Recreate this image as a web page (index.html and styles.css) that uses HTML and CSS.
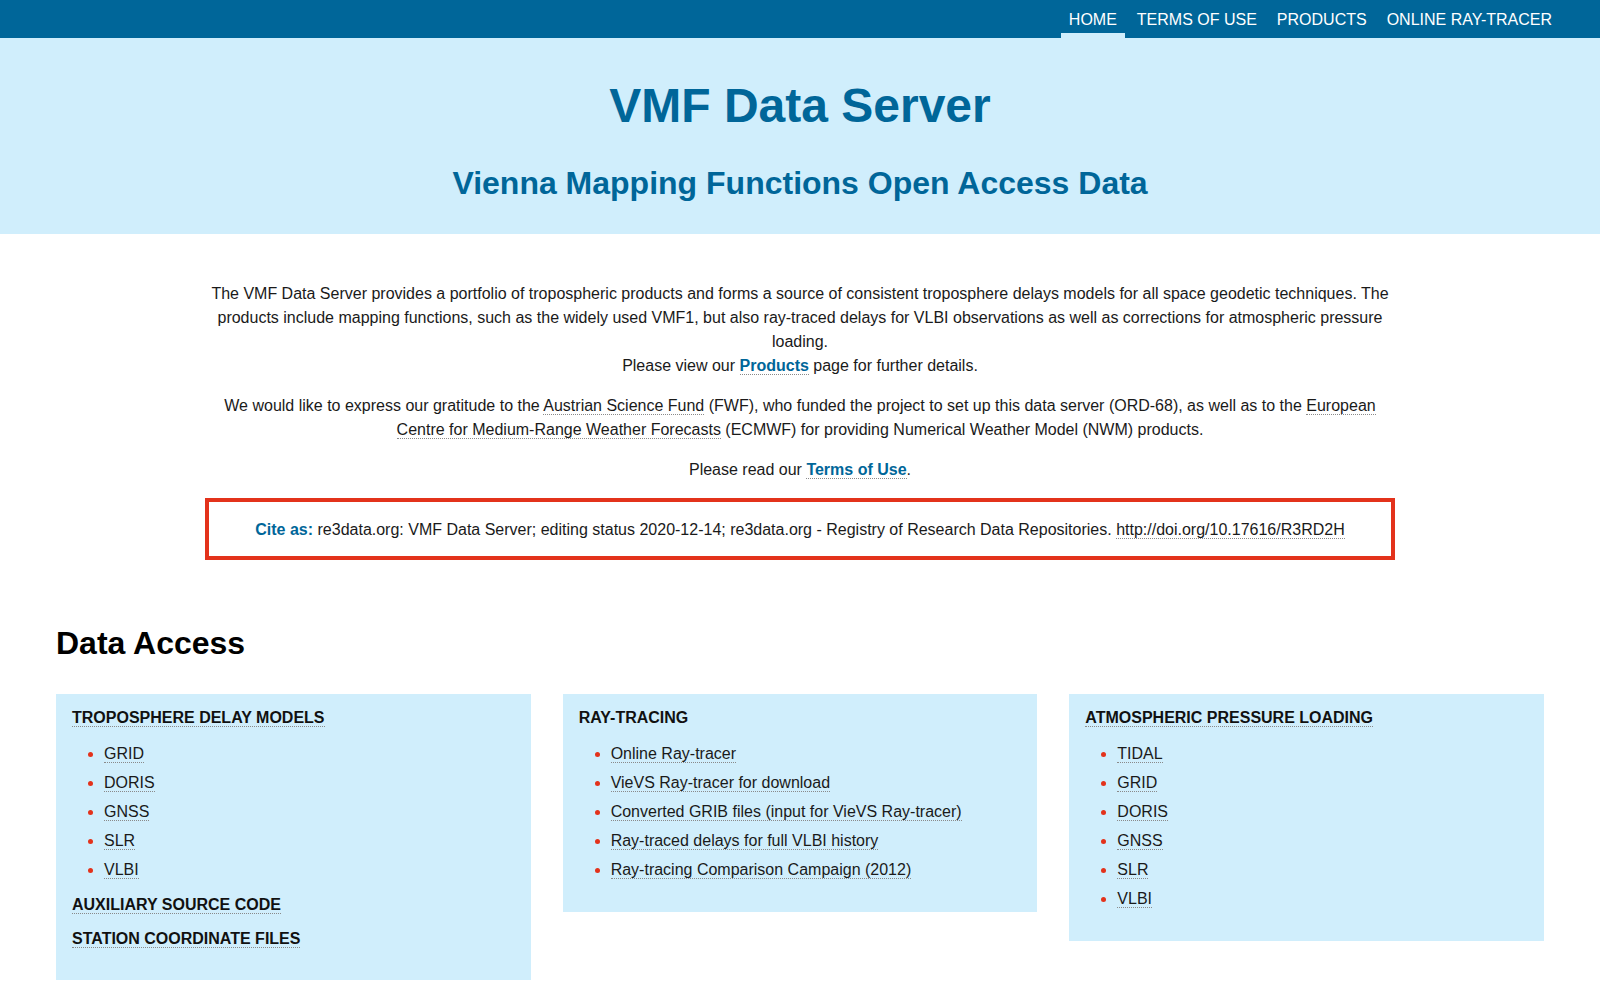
FILE: index.html
```html
<!DOCTYPE html>
<html lang="en">
<head>
    <meta charset="UTF-8">
    <meta name="viewport" content="width=device-width, initial-scale=1.0">
    <title>VMF Data Server</title>
    <link rel="stylesheet" href="styles.css">
</head>
<body>

    <nav class="topbar">
        <a href="#" class="active">Home</a>
        <a href="#">Terms of Use</a>
        <a href="#">Products</a>
        <a href="#">Online Ray-Tracer</a>
    </nav>

    <header class="hero">
        <h1>VMF Data Server</h1>
        <p class="subtitle">Vienna Mapping Functions Open Access Data</p>
    </header>

    <main class="page">
        <section class="intro">
            <p>
                The VMF Data Server provides a portfolio of tropospheric products and forms a source of consistent troposphere delays models for all space geodetic techniques. The products include mapping functions, such as the widely used VMF1, but also ray-traced delays for VLBI observations as well as corrections for atmospheric pressure loading.
                <br>
                Please view our <a href="#" class="strong-link">Products</a> page for further details.
            </p>
            <p>
                We would like to express our gratitude to the <a href="#">Austrian Science Fund</a> (FWF), who funded the project to set up this data server (ORD-68), as well as to the <a href="#">European Centre for Medium-Range Weather Forecasts</a> (ECMWF) for providing Numerical Weather Model (NWM) products.
            </p>
            <p>Please read our <a href="#" class="strong-link">Terms of Use</a>.</p>

            <div class="cite">
                <span class="cite-label">Cite as:</span> re3data.org: VMF Data Server; editing status 2020-12-14; re3data.org - Registry of Research Data Repositories. <a href="#">http://doi.org/10.17616/R3RD2H</a>
            </div>
        </section>

        <h2>Data Access</h2>

        <div class="access-grid">
            <div class="access-box">
                <h3><a href="#">Troposphere Delay Models</a></h3>
                <ul>
                    <li><a href="#">GRID</a></li>
                    <li><a href="#">DORIS</a></li>
                    <li><a href="#">GNSS</a></li>
                    <li><a href="#">SLR</a></li>
                    <li><a href="#">VLBI</a></li>
                </ul>
                <h3><a href="#">Auxiliary Source Code</a></h3>
                <h3><a href="#">Station Coordinate Files</a></h3>
            </div>

            <div class="access-box">
                <h3>Ray-Tracing</h3>
                <ul>
                    <li><a href="#">Online Ray-tracer</a></li>
                    <li><a href="#">VieVS Ray-tracer for download</a></li>
                    <li><a href="#">Converted GRIB files (input for VieVS Ray-tracer)</a></li>
                    <li><a href="#">Ray-traced delays for full VLBI history</a></li>
                    <li><a href="#">Ray-tracing Comparison Campaign (2012)</a></li>
                </ul>
            </div>

            <div class="access-box">
                <h3><a href="#">Atmospheric Pressure Loading</a></h3>
                <ul>
                    <li><a href="#">TIDAL</a></li>
                    <li><a href="#">GRID</a></li>
                    <li><a href="#">DORIS</a></li>
                    <li><a href="#">GNSS</a></li>
                    <li><a href="#">SLR</a></li>
                    <li><a href="#">VLBI</a></li>
                </ul>
            </div>
        </div>
    </main>

</body>
</html>
```

FILE: styles.css
```css
body {
    font-family: "Liberation Sans", Arial, sans-serif;
    font-size: 16px;
    line-height: 24px;
    color: #1a1a1a;
    background: #fff;
    margin: 0;
}
a {
    color: inherit;
    text-decoration: none;
    border-bottom: 1px dotted #8a8a8a;
}

/* top navigation */
.topbar {
    background: #006699;
    height: 38px;
    display: flex;
    justify-content: flex-end;
    gap: 4px;
    padding-right: 40px;
}
.topbar a {
    color: #fff;
    border: none;
    text-transform: uppercase;
    line-height: 38px;
    height: 38px;
    box-sizing: border-box;
    padding: 1px 8px 0;
}
.topbar a.active {
    box-shadow: inset 0 -5px 0 #d0eefc;
}

/* title band */
.hero {
    background: #d0eefc;
    color: #006699;
    text-align: center;
    padding: 39px 0 32px;
}
.hero h1 {
    font-size: 48px;
    line-height: 1.2;
    margin: 0;
}
.subtitle {
    font-size: 32px;
    font-weight: bold;
    line-height: 1.2;
    margin: 29px 0 0;
}

.page {
    padding: 32px 56px 40px;
}
.intro {
    width: 80%;
    margin: 0 auto;
    text-align: center;
}
.intro p {
    margin: 16px 0;
}
.strong-link {
    color: #006699;
    font-weight: bold;
}
.cite {
    border: 4px solid #e3321b;
    padding: 16px 16px 14px;
}
.cite-label {
    color: #006699;
    font-weight: bold;
}

h2 {
    font-size: 32px;
    line-height: 1.2;
    margin: 64px 0 32px;
    color: #000;
}

/* three data columns */
.access-grid {
    display: grid;
    grid-template-columns: repeat(3, 1fr);
    gap: 32px;
    align-items: start;
}
.access-box {
    background: #d0eefc;
    padding: 12px 16px 19px;
}
.access-box h3 {
    font-size: 16px;
    line-height: 24px;
    text-transform: uppercase;
    margin: 0 0 10px;
    color: #111;
}
.access-box ul {
    margin: 12px 0 11px;
    padding-left: 32px;
}
.access-box li {
    margin-bottom: 5px;
}
.access-box li::marker {
    color: #e3321b;
}
```
